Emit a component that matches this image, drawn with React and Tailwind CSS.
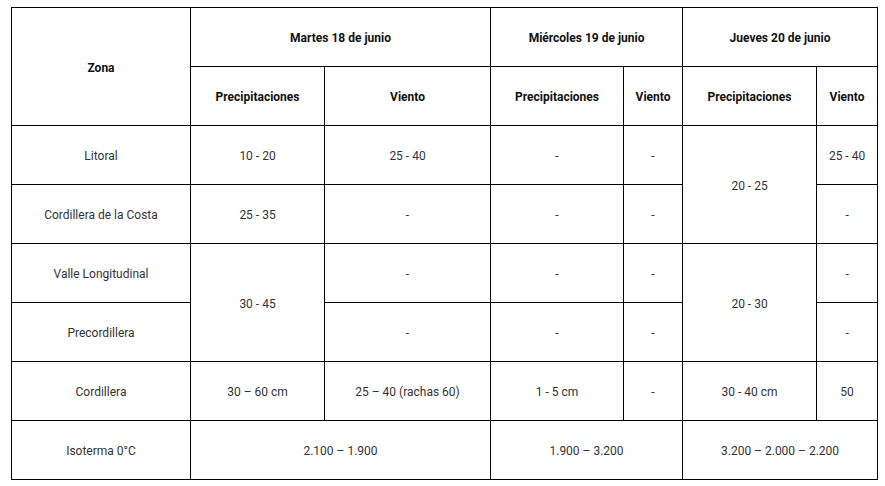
import React from "react";

const td = "border border-black text-center align-middle px-2 pt-[2px] text-[12px] text-[#333]";
const th = "border border-black text-center align-middle px-2 pt-[2px] text-[12px] font-bold text-[#111]";

export default function App() {
  return (
    <div className="bg-white w-[885px] h-[486px] pl-[11px] pt-[7px]" style={{ fontFamily: "Roboto, 'Noto Sans', sans-serif" }}>
      <table className="table-fixed border-collapse w-[866px]">
        <colgroup>
          <col className="w-[179px]" />
          <col className="w-[134px]" />
          <col className="w-[166px]" />
          <col className="w-[133px]" />
          <col className="w-[59px]" />
          <col className="w-[134px]" />
          <col className="w-[61px]" />
        </colgroup>
        <thead>
          <tr className="h-[59px]">
            <th rowSpan={2} className={th}>Zona</th>
            <th colSpan={2} className={th}>Martes 18 de junio</th>
            <th colSpan={2} className={th}>Miércoles 19 de junio</th>
            <th colSpan={2} className={th}>Jueves 20 de junio</th>
          </tr>
          <tr className="h-[59px]">
            <th className={th}>Precipitaciones</th>
            <th className={th}>Viento</th>
            <th className={th}>Precipitaciones</th>
            <th className={th}>Viento</th>
            <th className={th}>Precipitaciones</th>
            <th className={th}>Viento</th>
          </tr>
        </thead>
        <tbody>
          <tr className="h-[59px]">
            <td className={td}>Litoral</td>
            <td className={td}>10 - 20</td>
            <td className={td}>25 - 40</td>
            <td className={td}>-</td>
            <td className={td}>-</td>
            <td rowSpan={2} className={td}>20 - 25</td>
            <td className={td}>25 - 40</td>
          </tr>
          <tr className="h-[59px]">
            <td className={td}>Cordillera de la Costa</td>
            <td className={td}>25 - 35</td>
            <td className={td}>-</td>
            <td className={td}>-</td>
            <td className={td}>-</td>
            <td className={td}>-</td>
          </tr>
          <tr className="h-[59px]">
            <td className={td}>Valle Longitudinal</td>
            <td rowSpan={2} className={td}>30 - 45</td>
            <td className={td}>-</td>
            <td className={td}>-</td>
            <td className={td}>-</td>
            <td rowSpan={2} className={td}>20 - 30</td>
            <td className={td}>-</td>
          </tr>
          <tr className="h-[59px]">
            <td className={td}>Precordillera</td>
            <td className={td}>-</td>
            <td className={td}>-</td>
            <td className={td}>-</td>
            <td className={td}>-</td>
          </tr>
          <tr className="h-[59px]">
            <td className={td}>Cordillera</td>
            <td className={td}>30 – 60 cm</td>
            <td className={td}>25 – 40 (rachas 60)</td>
            <td className={td}>1 - 5 cm</td>
            <td className={td}>-</td>
            <td className={td}>30 - 40 cm</td>
            <td className={td}>50</td>
          </tr>
          <tr className="h-[59px]">
            <td className={td}>Isoterma 0°C</td>
            <td colSpan={2} className={td}>2.100 – 1.900</td>
            <td colSpan={2} className={td}>1.900 – 3.200</td>
            <td colSpan={2} className={td}>3.200 – 2.000 – 2.200</td>
          </tr>
        </tbody>
      </table>
    </div>
  );
}
